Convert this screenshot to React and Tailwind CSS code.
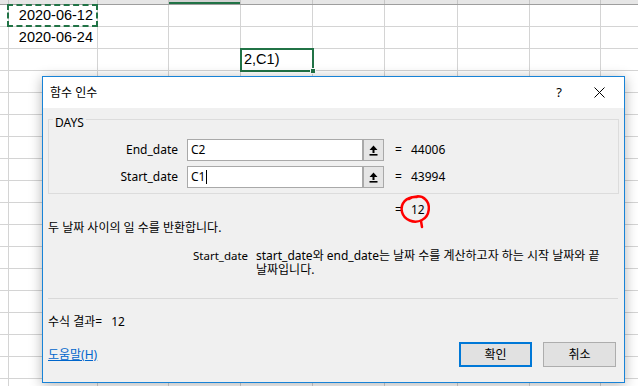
import React from "react";

const cols = [9, 89, 71, 72, 72, 72, 73, 72, 71, 60];
const ROWS = 18;
const ui = { fontFamily: '"Noto Sans", "Noto Sans CJK KR", sans-serif' };
const cellFont = { fontFamily: '"Liberation Sans", "Noto Sans CJK KR", sans-serif' };

function Grid() {
  const data = { "0-1": "2020-06-12", "1-1": "2020-06-24" };
  return (
    <div className="flex flex-col" style={cellFont}>
      <div className="flex h-[5px] bg-[#e6e6e6] border-b border-[#9e9e9e]">
        {cols.map((w, i) => (
          <div
            key={i}
            className={`shrink-0 h-full border-r border-[#c6c6c6] ${i === 3 ? "bg-[#d2d2d2] flex flex-col justify-end" : ""}`}
            style={{ width: w }}
          >
            {i === 3 && <div className="h-[2px] bg-[#217346]" />}
          </div>
        ))}
      </div>
      {Array.from({ length: ROWS }).map((_, r) => (
        <div key={r} className="flex h-[22px] border-b border-[#d4d4d4]">
          {cols.map((w, c) => (
            <div
              key={c}
              className="shrink-0 h-full border-r border-[#d4d4d4] flex items-center justify-end pr-[4px] text-[14.5px] text-black leading-none"
              style={{ width: w }}
            >
              {data[`${r}-${c}`] || ""}
            </div>
          ))}
        </div>
      ))}
    </div>
  );
}

function ArrowIcon() {
  return (
    <svg width="9" height="11" viewBox="0 0 9 11">
      <path d="M4.5 0.5 L8.5 5 L5.5 5 L5.5 8 L3.5 8 L3.5 5 L0.5 5 Z" fill="#000" />
      <rect x="0.5" y="9" width="8" height="1.6" fill="#000" />
    </svg>
  );
}

function InputRow({ label, value, result, caret }) {
  return (
    <div className="flex items-center h-[22px]">
      <div className="w-[129px] text-right pr-0">{label}</div>
      <div className="ml-[9px] w-[197px] h-[22px] flex border border-[#a9a9a9] bg-white">
        <div className="flex-1 flex items-center pl-[3px]">
          <span>{value}</span>
          {caret && <span className="inline-block w-px h-[14px] bg-black ml-px" />}
        </div>
        <div className="w-[21px] h-full border-l-2 border-[#a9a9a9] bg-[#e5e5e5] flex items-center justify-center">
          <ArrowIcon />
        </div>
      </div>
      <div className="ml-[11px] w-[16px]">=</div>
      <div>{result}</div>
    </div>
  );
}

export default function App() {
  return (
    <div className="relative w-[638px] h-[386px] overflow-hidden bg-white">
      <Grid />

      {/* marching ants on A1 */}
      <div className="absolute left-[7px] top-[4px] w-[91px] h-[23px] border-2 border-dashed border-[#217346]" />

      {/* active cell D3 */}
      <div
        className="absolute left-[240px] top-[48px] w-[74px] h-[24px] border-2 border-[#217346] bg-white flex items-center pl-[2px] text-[14.5px] text-black"
        style={cellFont}
      >
        2,C1)
        <div className="absolute right-[-4px] bottom-[-4px] w-[6px] h-[6px] bg-[#217346] border border-white" />
      </div>

      {/* dialog */}
      <div
        className="absolute left-[42px] top-[76px] w-[583px] h-[307px] border border-[#1883d7] bg-[#f0f0f0] shadow-[0_2px_12px_rgba(0,0,0,0.3)] flex flex-col text-[12px] text-black"
        style={ui}
      >
        <div className="h-[31px] bg-white flex items-center pl-[7px] shrink-0">
          <span className="flex-1">함수 인수</span>
          <span className="w-[20px] text-[13px] text-center mr-[25px]">?</span>
          <svg width="11" height="11" viewBox="0 0 11 11" className="mr-[19px]">
            <path d="M0.5 0.5 L10.5 10.5 M10.5 0.5 L0.5 10.5" stroke="#000" strokeWidth="1" />
          </svg>
        </div>

        <div className="flex flex-col px-[5px] leading-[16px]">
          <div className="relative mt-[11px] h-[75px] border border-[#dcdcdc] pt-[19px] flex flex-col gap-[5px]">
            <div className="absolute left-[4px] top-[-5px] bg-[#f0f0f0] px-[2px]">DAYS</div>
            <InputRow label="End_date" value="C2" result="44006" />
            <InputRow label="Start_date" value="C1" result="43994" caret />
          </div>

          <div className="mt-[8px] flex pl-[347px]">
            <span className="w-[16px]">=</span>
            <span>12</span>
          </div>

          <div className="mt-[2px]">두 날짜 사이의 일 수를 반환합니다.</div>

          <div className="mt-[13px] flex pl-[145px] leading-[14px]">
            <div className="w-[63px] shrink-0 whitespace-nowrap text-[11.5px]">Start_date</div>
            <div className="flex flex-col">
              <span className="whitespace-nowrap">start_date와 end_date는 날짜 수를 계산하고자 하는 시작 날짜와 끝</span>
              <span className="whitespace-nowrap">날짜입니다.</span>
            </div>
          </div>

          <div className="mt-[21px] h-px bg-[#d9d9d9] mr-[1px]" />

          <div className="mt-[15px] flex">
            <span>수식 결과=</span>
            <span className="ml-[9px]">12</span>
          </div>

          <div className="mt-[12px] flex items-center">
            <span className="flex-1 text-[#0066cc] underline">도움말(H)</span>
            <div className="w-[73px] h-[25px] border-2 border-[#0078d7] bg-[#e1e1e1] flex items-center justify-center">확인</div>
            <div className="ml-[11px] mr-[3px] w-[73px] h-[25px] border border-[#adadad] bg-[#e1e1e1] flex items-center justify-center">취소</div>
          </div>
        </div>
      </div>

      {/* red hand-drawn circle */}
      <svg className="absolute left-0 top-0 pointer-events-none" width="638" height="386" viewBox="0 0 638 386">
        <path
          d="M417 197 C406 196 400 204 402 212 C404 220 414 224 422 220 C430 216 431 204 425 199 C421 195 413 196 409 199"
          fill="none"
          stroke="#ff0000"
          strokeWidth="2.5"
          strokeLinecap="round"
        />
        <path d="M421 221 L422 227" stroke="#ff0000" strokeWidth="2.5" strokeLinecap="round" />
      </svg>
    </div>
  );
}
